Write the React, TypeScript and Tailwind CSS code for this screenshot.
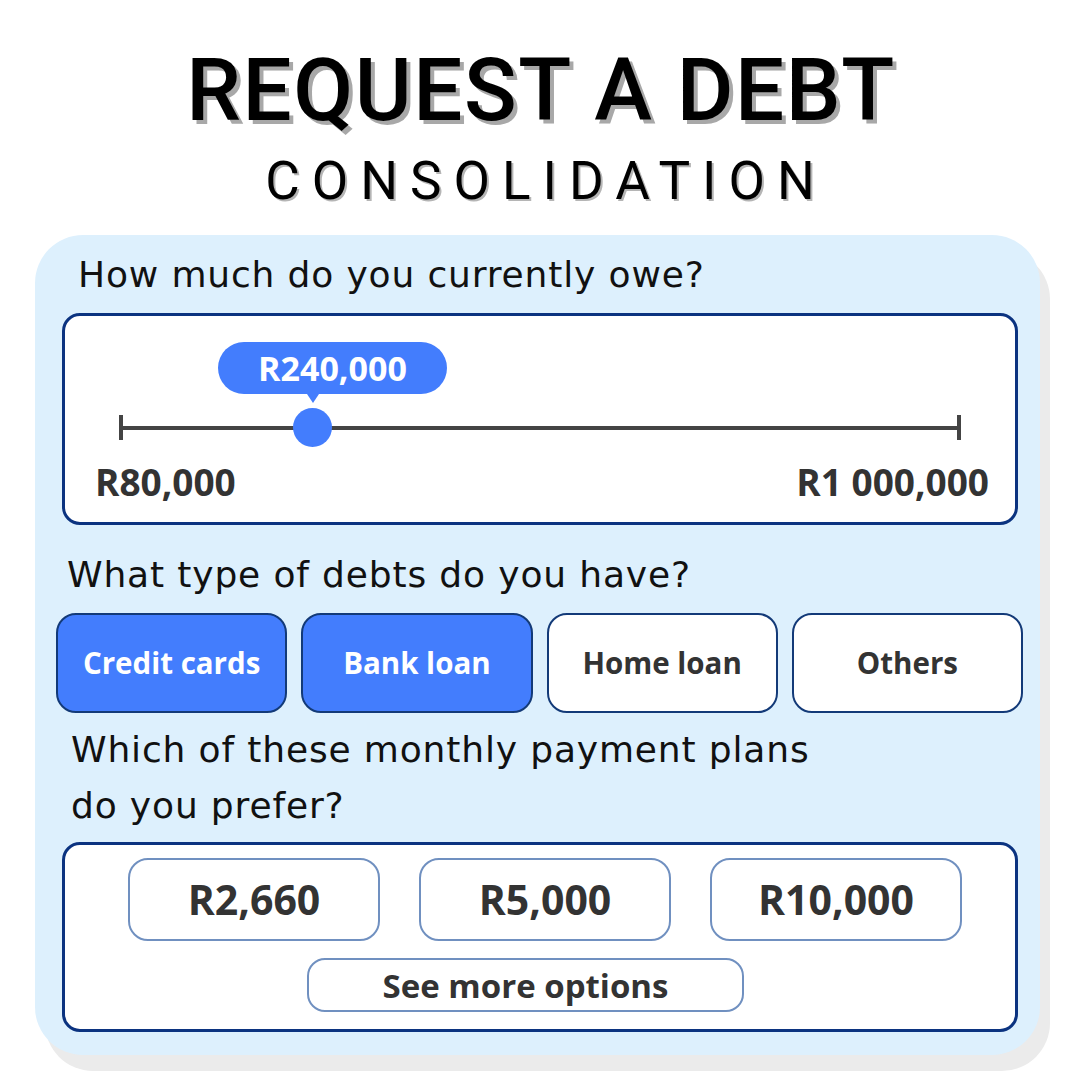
import React from 'react';

const debtTypes = [
  { label: 'Credit cards', selected: true },
  { label: 'Bank loan', selected: true },
  { label: 'Home loan', selected: false },
  { label: 'Others', selected: false },
];

const plans = ['R2,660', 'R5,000', 'R10,000'];

const questionFont = "font-['DejaVu_Sans',sans-serif] text-[36px] tracking-[0.85px] text-[#111111]";
const boldFont = "font-['Open_Sans',sans-serif] font-bold";

const App: React.FC = () => {
  return (
    <div className="w-[1080px] h-[1080px] bg-white overflow-hidden">
      {/* Heading */}
      <div className="h-[235px] pt-[47px] flex flex-col items-center font-['Roboto',sans-serif] text-black">
        <h1 className="text-[87px] leading-[87px] font-medium tracking-[1.6px] pl-[2px] [text-shadow:4px_4px_0_#a8a8a8]">
          REQUEST A DEBT
        </h1>
        <div className="mt-[21px] text-[53px] leading-[53px] tracking-[12px] pl-[12px] [text-shadow:2px_2px_0_#b5b5b5]">
          CONSOLIDATION
        </div>
      </div>

      {/* Card */}
      <div className="ml-[35px] w-[1005px] h-[820px] rounded-[48px] bg-[#ddf0fd] shadow-[10px_16px_0_#ebebeb] flex flex-col">
        <div className={`${questionFont} mt-[20px] ml-[43px] leading-[40px]`}>
          How much do you currently owe?
        </div>

        {/* Amount slider */}
        <div className="mt-[18px] ml-[27px] w-[956px] h-[212px] bg-white border-[3px] border-[#0b3380] rounded-[18px] flex flex-col">
          <div className="relative mt-[99px] ml-[54px] w-[842px] h-[25px] flex items-center">
            <div className="w-[4px] h-[25px] bg-[#444444]" />
            <div className="flex-1 h-[4px] bg-[#444444]" />
            <div className="w-[4px] h-[25px] bg-[#444444]" />

            <div className="absolute left-[99px] top-[-73px] w-[229px] h-[52px] rounded-full bg-[#437dfd] flex items-center justify-center">
              <span className={`${boldFont} text-[34px] leading-none text-white`}>R240,000</span>
              <div className="absolute top-full left-[89px] w-0 h-0 border-l-[6px] border-r-[6px] border-t-[9px] border-l-transparent border-r-transparent border-t-[#437dfd]" />
            </div>
            <div className="absolute left-[174px] top-[-7px] w-[39px] h-[39px] rounded-full bg-[#437dfd]" />
          </div>

          <div className={`${boldFont} mt-[22px] pl-[30px] pr-[26px] flex justify-between text-[37px] leading-[40px] text-[#333333]`}>
            <span>R80,000</span>
            <span>R1 000,000</span>
          </div>
        </div>

        <div className={`${questionFont} mt-[30px] ml-[32px] leading-[40px]`}>
          What type of debts do you have?
        </div>

        {/* Debt types */}
        <div className="mt-[18px] ml-[21px] w-[967px] grid grid-cols-4 gap-[14px]">
          {debtTypes.map((d) => (
            <div
              key={d.label}
              className={`h-[100px] rounded-[20px] border-2 border-[#133a78] flex items-center justify-center ${
                d.selected ? 'bg-[#437dfd] text-white' : 'bg-white text-[#333333]'
              }`}
            >
              <span className={`${boldFont} text-[29.5px] leading-none`}>{d.label}</span>
            </div>
          ))}
        </div>

        <div className={`${questionFont} mt-[9px] ml-[36px] leading-[56px]`}>
          Which of these monthly payment plans
          <br />
          do you prefer?
        </div>

        {/* Payment plans */}
        <div className="mt-[8px] ml-[27px] w-[956px] h-[190px] bg-white border-[3px] border-[#0b3380] rounded-[18px] flex flex-col">
          <div className="mt-[13px] ml-[63px] flex gap-[39px]">
            {plans.map((p) => (
              <div
                key={p}
                className="w-[252px] h-[83px] rounded-[20px] border-2 border-[#7090c0] flex items-center justify-center"
              >
                <span className={`${boldFont} text-[41px] leading-none text-[#333333]`}>{p}</span>
              </div>
            ))}
          </div>
          <div className="mt-[17px] ml-[242px] w-[437px] h-[54px] rounded-[18px] border-2 border-[#7090c0] flex items-center justify-center">
            <span className={`${boldFont} text-[33px] leading-none text-[#333333]`}>See more options</span>
          </div>
        </div>
      </div>
    </div>
  );
};

export default App;
